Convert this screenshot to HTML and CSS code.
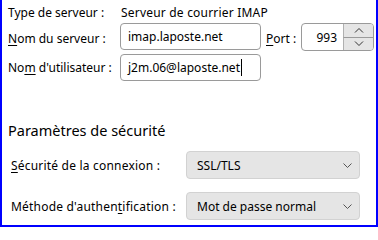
FILE: index.html
```html
<!DOCTYPE html>
<html lang="fr">
<head>
<meta charset="utf-8">
<link rel="stylesheet" href="styles.css">
</head>
<body>
<div class="frame">
  <div class="server">
    <div class="label r1">Type de serveur :</div>
    <div class="value r1">Serveur de courrier IMAP</div>
    <div class="label r2"><u>N</u>om du serveur :</div>
    <div class="field r2"><span>imap.laposte.net</span></div>
    <div class="label port r2"><u>P</u>ort :</div>
    <div class="spin r2">
      <span class="num">993</span>
      <span class="btns">
        <span class="btn up"><svg width="10" height="6" viewBox="0 0 10 6"><path d="M1 5.5 L5 1.5 L9 5.5" fill="none" stroke="#333" stroke-width="1"/></svg></span>
        <span class="btn down"><svg width="10" height="6" viewBox="0 0 10 6"><path d="M1 0.5 L5 4.5 L9 0.5" fill="none" stroke="#333" stroke-width="1"/></svg></span>
      </span>
    </div>
    <div class="label r3">No<u>m</u> d'utilisateur :</div>
    <div class="field r3"><span>j2m.06@laposte.net</span><span class="caret"></span></div>
  </div>
  <h2 class="heading">Paramètres de sécurité</h2>
  <div class="security">
    <div class="label2"><u>S</u>écurité de la connexion :</div>
    <div class="select"><span>SSL/TLS</span><svg width="9" height="5" viewBox="0 0 9 5"><path d="M0.5 0.5 L4.5 4.5 L8.5 0.5" fill="none" stroke="#555" stroke-width="1"/></svg></div>
    <div class="label2">Méthode d'authen<u>t</u>ification :</div>
    <div class="select"><span>Mot de passe normal</span><svg width="9" height="5" viewBox="0 0 9 5"><path d="M0.5 0.5 L4.5 4.5 L8.5 0.5" fill="none" stroke="#555" stroke-width="1"/></svg></div>
  </div>
</div>
</body>
</html>
```
FILE: styles.css
```css
html, body {
  margin: 0;
  padding: 0;
  background: #fff;
}
.frame {
  box-sizing: border-box;
  width: 378px;
  height: 227px;
  border: 2px solid #0000ff;
  border-top: none;
  padding-left: 6px;
  font-family: "Noto Sans", "Open Sans", sans-serif;
  font-size: 12px;
  color: #000;
  overflow: hidden;
}
u {
  text-decoration: underline;
  text-underline-offset: 2px;
}
.server {
  display: grid;
  grid-template-columns: 110px 143px 40px 73px;
  grid-template-rows: 21px 31px 27px;
  align-items: center;
  padding-top: 2px;
}
.r1 { grid-row: 1; }
.r2 { grid-row: 2; }
.r3 { grid-row: 3; }
.value {
  grid-column: 2 / 5;
  padding-left: 3px;
  letter-spacing: 0.2px;
}
.field {
  box-sizing: border-box;
  height: 27px;
  border: 1px solid #9a9a9a;
  border-radius: 4px;
  display: flex;
  align-items: center;
  padding-left: 7px;
  margin-left: 2px;
}
.r2.field { align-self: start; }
.caret {
  display: inline-block;
  width: 1px;
  height: 17px;
  background: #000;
  margin-left: 1px;
}
.port {
  padding-left: 5px;
}
.spin {
  box-sizing: border-box;
  height: 28px;
  border: 1px solid #9a9a9a;
  border-radius: 4px;
  display: flex;
  align-items: stretch;
  align-self: start;
}
.num {
  flex: 1;
  display: flex;
  align-items: center;
  justify-content: flex-end;
  padding-right: 6px;
}
.btns {
  width: 30px;
  display: flex;
  flex-direction: column;
}
.btn {
  flex: 1;
  background: #e5e5e5;
  border-left: 1px solid #b0b0b0;
  display: flex;
  align-items: center;
  justify-content: center;
}
.btn.up {
  border-bottom: 1px solid #9a9a9a;
  border-top-right-radius: 3px;
}
.btn.down {
  border-bottom-right-radius: 3px;
}
.heading {
  margin: 39px 0 0 0;
  font-size: 14.5px;
  font-weight: normal;
  line-height: 20px;
}
.security {
  display: grid;
  grid-template-columns: 178px 174px;
  grid-template-rows: 28px 28px;
  row-gap: 13px;
  align-items: center;
  margin-top: 11px;
}
.label2 {
  padding-left: 3px;
  letter-spacing: 0.2px;
}
.select {
  box-sizing: border-box;
  height: 28px;
  background: #e5e5e5;
  border: 1px solid #d2d2d2;
  border-radius: 4px;
  display: flex;
  align-items: center;
  justify-content: space-between;
  padding: 0 7px 0 10px;
}
```
